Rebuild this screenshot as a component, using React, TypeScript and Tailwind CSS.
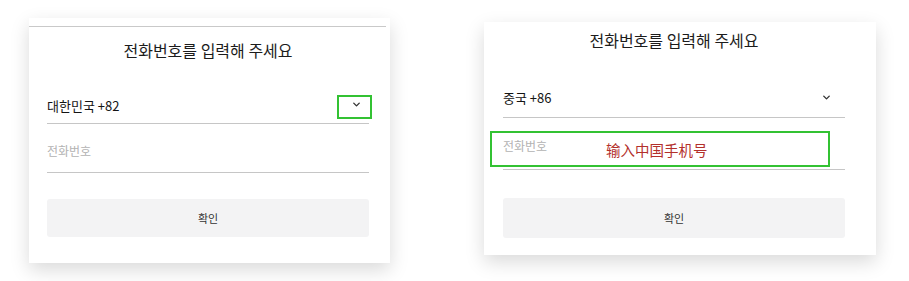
import { ChevronDown } from "lucide-react";

const font = { fontFamily: '"Noto Sans CJK KR", "Noto Sans", sans-serif' };

export default function App() {
  return (
    <main
      className="w-[909px] h-[281px] bg-white flex items-start pl-[29px] gap-[94px] overflow-hidden"
      style={font}
    >
      {/* 왼쪽 카드: 대한민국 */}
      <section className="relative w-[361px] h-[245px] mt-[18px] bg-white shadow-[0_7px_18px_rgba(0,0,0,0.15)] flex flex-col">
        <div className="mt-[8px] mr-[4px] h-px bg-[#c9c9c9]" />
        <div className="pl-[18px] pr-[21px] flex flex-col">
          <h1 className="mt-[11px] h-[24px] leading-[24px] text-[16px] text-center text-[#1c1c1c]">
            전화번호를 입력해 주세요
          </h1>
          <div className="mt-[35px] pb-[8px] border-b border-[#c6c6c6] flex items-center justify-between">
            <span className="h-[18px] leading-[18px] text-[13px] text-[#141414]">대한민국 +82</span>
            <ChevronDown size={11} strokeWidth={3} className="mr-[7px] -mt-[3px] text-[#333]" />
          </div>
          <div className="mt-[18px] pb-[12px] border-b border-[#c6c6c6]">
            <span className="block h-[18px] leading-[18px] text-[12px] text-[#b3b3b3]">전화번호</span>
          </div>
          <button className="mt-[26px] h-[38px] rounded-[3px] bg-[#f3f3f4] text-[11px] text-[#333]">
            확인
          </button>
        </div>
        <div className="absolute left-[308px] top-[77px] w-[35px] h-[24px] border-2 border-[#33c233]" />
      </section>

      {/* 오른쪽 카드: 중국 */}
      <section className="relative w-[392px] h-[233px] mt-[22px] bg-white shadow-[0_7px_18px_rgba(0,0,0,0.15)] pl-[19px] pr-[31px] flex flex-col">
        <h1 className="mt-[6px] h-[24px] leading-[24px] text-[16px] text-center text-[#1c1c1c]">
          전화번호를 입력해 주세요
        </h1>
        <div className="mt-[37px] pb-[10px] border-b border-[#c6c6c6] flex items-center justify-between">
          <span className="h-[18px] leading-[18px] text-[13px] text-[#141414]">중국 +86</span>
          <ChevronDown size={11} strokeWidth={3} className="mr-[13px] -mt-[1px] text-[#333]" />
        </div>
        <div className="relative mt-[19px] pb-[14px] border-b border-[#c6c6c6]">
          <span className="block h-[18px] leading-[18px] text-[12px] text-[#b3b3b3]">전화번호</span>
          <span
            className="absolute left-[103px] top-[3px] leading-[20px] text-[14.5px] text-[#b3302b]"
            style={{ fontFamily: '"Noto Sans CJK SC", "Noto Sans", sans-serif' }}
          >
            输入中国手机号
          </span>
        </div>
        <button className="mt-[28px] h-[40px] rounded-[3px] bg-[#f3f3f4] text-[11px] text-[#333]">
          확인
        </button>
        <div className="absolute left-[6px] top-[109px] w-[340px] h-[36px] border-2 border-[#33c233]" />
      </section>
    </main>
  );
}
